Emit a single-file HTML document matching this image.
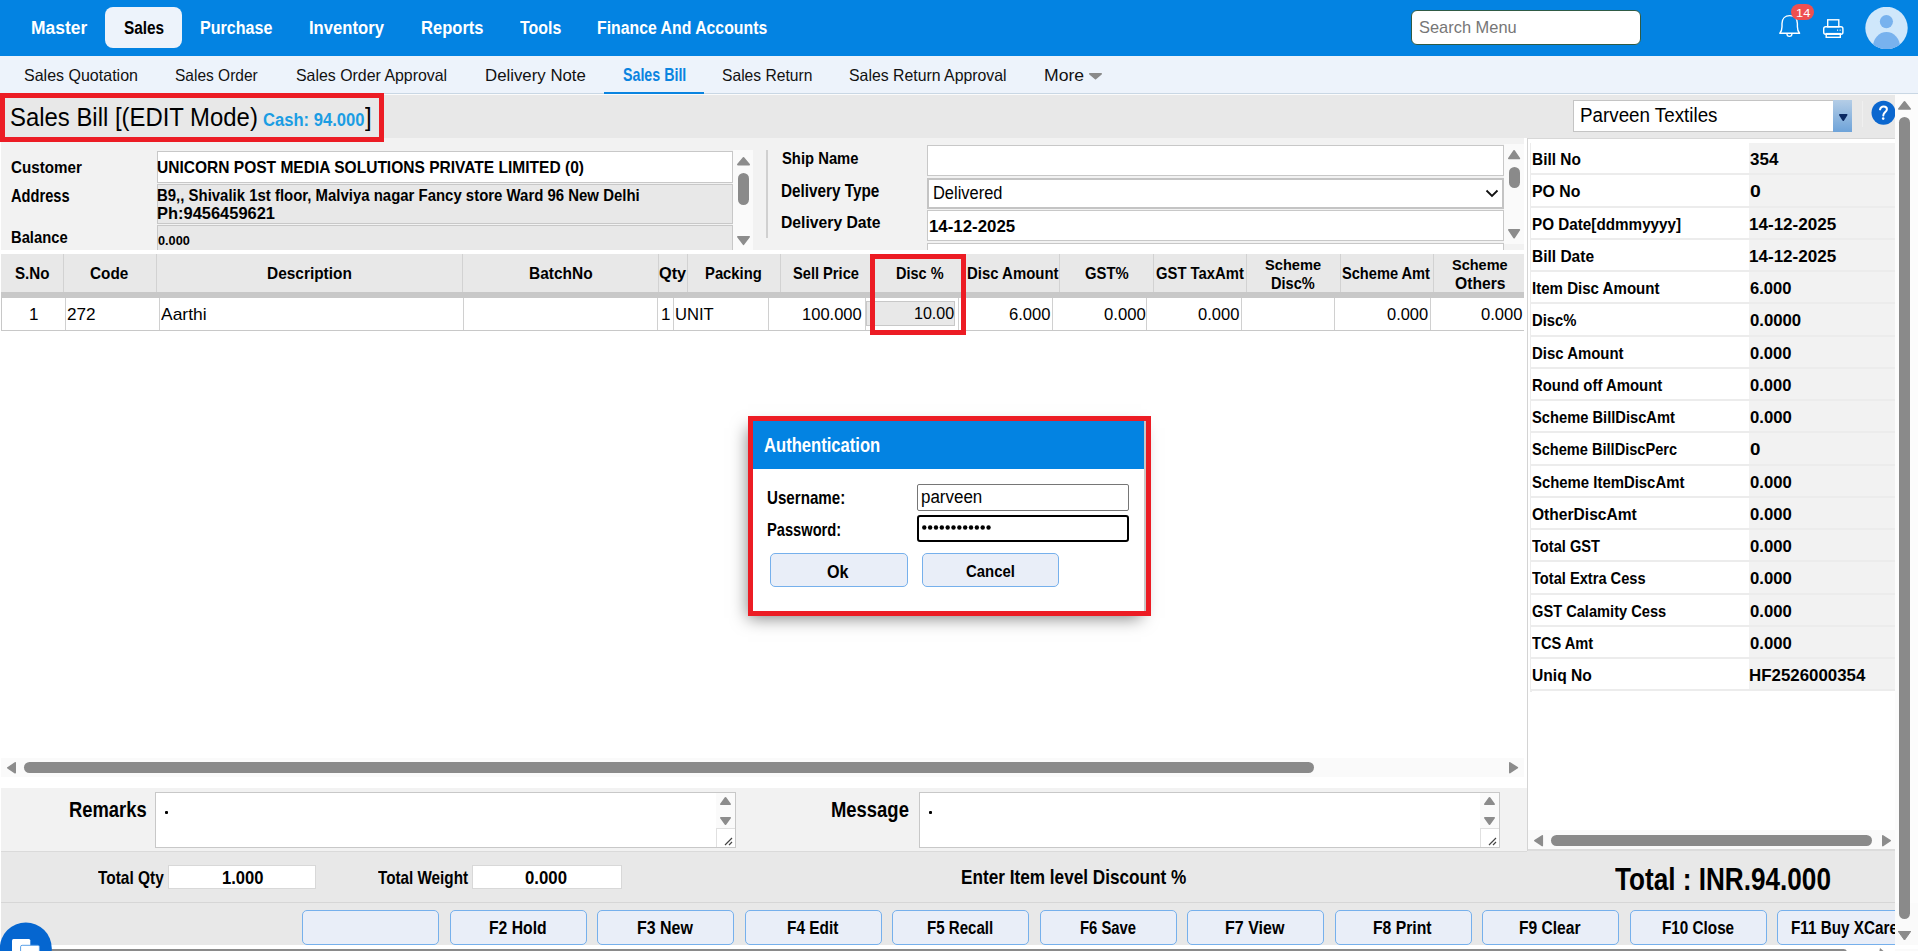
<!DOCTYPE html><html><head><meta charset="utf-8"><style>
html,body{margin:0;padding:0;width:1918px;height:951px;overflow:hidden;background:#fff;position:relative}
.b{position:absolute;box-sizing:border-box}
.t{position:absolute;line-height:1;white-space:nowrap;transform-origin:0 0;font-family:"Liberation Sans",sans-serif}
</style></head><body>
<div class="b" style="left:0px;top:0px;width:1918px;height:56px;background:#0383e2"></div>
<div class="b" style="left:105px;top:7px;width:77px;height:41px;background:#edf3fb;border-radius:8px"></div>
<div class="b" style="left:1411px;top:10px;width:230px;height:35px;background:#fff;border:1px solid #2f5b45;border-radius:6px;box-sizing:border-box"></div>
<svg class="b" style="left:1776px;top:12px" width="28" height="30" viewBox="0 0 28 30"><path d="M3.8 21.3 C5.4 19.6 6 17.8 6 14.8 L6 11.6 C6 6.4 9.3 3.6 13.7 3.6 C18.1 3.6 21.4 6.4 21.4 11.6 L21.4 14.8 C21.4 17.8 22 19.6 23.6 21.3 Z" fill="none" stroke="#fff" stroke-width="1.4" stroke-linejoin="round"/><path d="M10.9 21.6 C10.9 25.4 16 25.4 16 21.6" fill="none" stroke="#fff" stroke-width="1.3"/></svg>
<div class="b" style="left:1791px;top:4px;width:23px;height:16px;background:#ee5050;border-radius:8px"></div>
<svg class="b" style="left:1821px;top:17px" width="26" height="24" viewBox="0 0 26 24"><rect x="6.7" y="2.8" width="11.1" height="7" fill="none" stroke="#fff" stroke-width="1.4"/><rect x="2.7" y="9.8" width="19.2" height="7.4" rx="2" fill="none" stroke="#fff" stroke-width="1.4"/><rect x="5.2" y="16.6" width="14.1" height="3.7" fill="none" stroke="#fff" stroke-width="1.4"/><rect x="16" y="12.6" width="1.1" height="1.1" fill="#fff"/><rect x="18.6" y="12.6" width="1.1" height="1.1" fill="#fff"/></svg>
<svg class="b" style="left:1865px;top:7px" width="43" height="42" viewBox="0 0 43 42"><defs><clipPath id="av"><circle cx="21.5" cy="21" r="21.2"/></clipPath></defs><circle cx="21.5" cy="21" r="21.2" fill="#cfe7fb"/><g clip-path="url(#av)"><circle cx="21.4" cy="14.6" r="6.6" fill="#78b2ee"/><ellipse cx="21.5" cy="40" rx="13.6" ry="15" fill="#78b2ee"/></g></svg>
<div class="b" style="left:0px;top:56px;width:1918px;height:37px;background:#edf3fb"></div>
<div class="b" style="left:0px;top:93px;width:1918px;height:1px;background:#c9d7e4"></div>
<div class="b" style="left:604px;top:92px;width:100px;height:2px;background:#0a84e0"></div>
<svg class="b" style="left:1089px;top:73px;overflow:visible" width="13" height="6.5" viewBox="0 0 13 6.5"><path d="M0.80 0.80 L12.20 0.80 L6.50 5.70Z" fill="#8a8a8a" stroke="#8a8a8a" stroke-width="1.6" stroke-linejoin="round"/></svg>
<div class="b" style="left:0px;top:94px;width:1895px;height:44px;background:#e8e8e8"></div>
<div class="b" style="left:0px;top:94px;width:1895px;height:1px;background:#fbfbfb"></div>
<div class="b" style="left:0px;top:93px;width:384px;height:49px;border:5px solid #ec1c24;box-sizing:border-box;z-index:4"></div>
<div class="b" style="left:1573px;top:100px;width:279px;height:32px;background:#fff;border:1px solid #c4c4c4;box-sizing:border-box"></div>
<div class="b" style="left:1833px;top:100px;width:19px;height:32px;background:linear-gradient(#b4cde6,#6ea3d9)"></div>
<svg class="b" style="left:1838.5px;top:114px;overflow:visible" width="8.5" height="7" viewBox="0 0 8.5 7"><path d="M0.80 0.80 L7.70 0.80 L4.25 6.20Z" fill="#0c2a63" stroke="#0c2a63" stroke-width="1.6" stroke-linejoin="round"/></svg>
<div class="b" style="left:1862px;top:101px;width:1px;height:26px;background:#f0f0f0"></div>
<svg class="b" style="left:1871px;top:100px" width="25" height="26" viewBox="0 0 25 26"><circle cx="12.5" cy="12.8" r="12" fill="#0b67cf"/><path d="M9 9.4 C9.6 7.3 10.9 6.6 12.6 6.6 C14.6 6.6 15.9 7.7 15.9 9.3 C15.9 11.6 12.8 12.4 12.4 14.8 L12.3 15.6" fill="none" stroke="#fff" stroke-width="2" stroke-linecap="round"/><circle cx="12.2" cy="18.6" r="1.3" fill="#fff"/></svg>
<div class="b" style="left:1895px;top:94px;width:23px;height:857px;background:#fcfcfc"></div>
<svg class="b" style="left:1898px;top:100.5px;overflow:visible" width="13" height="8.700000000000003" viewBox="0 0 13 8.700000000000003"><path d="M6.50 0.80 L12.20 7.90 L0.80 7.90Z" fill="#8c8c8c" stroke="#8c8c8c" stroke-width="1.6" stroke-linejoin="round"/></svg>
<div class="b" style="left:1899px;top:117px;width:11px;height:802px;background:#8a8a8a;border-radius:5.5px"></div>
<svg class="b" style="left:1898px;top:930.6px;overflow:visible" width="13" height="9.100000000000023" viewBox="0 0 13 9.100000000000023"><path d="M0.80 0.80 L12.20 0.80 L6.50 8.30Z" fill="#8c8c8c" stroke="#8c8c8c" stroke-width="1.6" stroke-linejoin="round"/></svg>
<div class="b" style="left:1px;top:138px;width:1523px;height:112px;background:#f2f2f2"></div>
<div class="b" style="left:157px;top:151px;width:576px;height:32px;background:#fff;border:1px solid #c8c8c8;box-sizing:border-box"></div>
<div class="b" style="left:157px;top:184px;width:576px;height:40px;background:#e8e8e8;border:1px solid #c8c8c8;box-sizing:border-box"></div>
<div class="b" style="left:157px;top:225px;width:576px;height:25px;background:#e8e8e8;border:1px solid #c8c8c8;border-bottom:none;box-sizing:border-box"></div>
<div class="b" style="left:733px;top:150px;width:20px;height:100px;background:#fafafa"></div>
<svg class="b" style="left:737px;top:157px;overflow:visible" width="13" height="8.400000000000006" viewBox="0 0 13 8.400000000000006"><path d="M6.50 0.80 L12.20 7.60 L0.80 7.60Z" fill="#8c8c8c" stroke="#8c8c8c" stroke-width="1.6" stroke-linejoin="round"/></svg>
<div class="b" style="left:738px;top:172.7px;width:11px;height:32.30000000000001px;background:#8a8a8a;border-radius:5.5px"></div>
<svg class="b" style="left:737px;top:235.5px;overflow:visible" width="13" height="9.099999999999994" viewBox="0 0 13 9.099999999999994"><path d="M0.80 0.80 L12.20 0.80 L6.50 8.30Z" fill="#8c8c8c" stroke="#8c8c8c" stroke-width="1.6" stroke-linejoin="round"/></svg>
<div class="b" style="left:766px;top:150px;width:2px;height:87.5px;background:#d0d0d0"></div>
<div class="b" style="left:927px;top:145px;width:577px;height:31px;background:#fff;border:1px solid #c8c8c8;box-sizing:border-box"></div>
<div class="b" style="left:927px;top:177.5px;width:577px;height:31.5px;background:#fff;border:2px solid #c4c4c4;box-sizing:border-box"></div>
<svg class="b" style="left:1485px;top:189px" width="14" height="9" viewBox="0 0 14 9"><path d="M1.5 1.5 L7 7 L12.5 1.5" fill="none" stroke="#111" stroke-width="1.8"/></svg>
<div class="b" style="left:927px;top:210px;width:577px;height:30.5px;background:#fff;border:1px solid #c8c8c8;box-sizing:border-box"></div>
<div class="b" style="left:927px;top:242.5px;width:577px;height:7.5px;background:#fff;border:1px solid #c8c8c8;border-bottom:none;box-sizing:border-box"></div>
<div class="b" style="left:1504px;top:144px;width:20px;height:99.5px;background:#fafafa"></div>
<svg class="b" style="left:1508.4px;top:150px;overflow:visible" width="12.199999999999818" height="9.300000000000011" viewBox="0 0 12.199999999999818 9.300000000000011"><path d="M6.10 0.80 L11.40 8.50 L0.80 8.50Z" fill="#8c8c8c" stroke="#8c8c8c" stroke-width="1.6" stroke-linejoin="round"/></svg>
<div class="b" style="left:1509px;top:167px;width:11px;height:20.599999999999994px;background:#8a8a8a;border-radius:5.5px"></div>
<svg class="b" style="left:1508.4px;top:229.3px;overflow:visible" width="12.199999999999818" height="9.5" viewBox="0 0 12.199999999999818 9.5"><path d="M0.80 0.80 L11.40 0.80 L6.10 8.70Z" fill="#8c8c8c" stroke="#8c8c8c" stroke-width="1.6" stroke-linejoin="round"/></svg>
<div class="b" style="left:1px;top:254px;width:1523px;height:38px;background:#e8e8e8"></div>
<div class="b" style="left:63px;top:254px;width:1px;height:38px;background:#d2d2d2"></div>
<div class="b" style="left:156px;top:254px;width:1px;height:38px;background:#d2d2d2"></div>
<div class="b" style="left:462px;top:254px;width:1px;height:38px;background:#d2d2d2"></div>
<div class="b" style="left:658px;top:254px;width:1px;height:38px;background:#d2d2d2"></div>
<div class="b" style="left:687px;top:254px;width:1px;height:38px;background:#d2d2d2"></div>
<div class="b" style="left:780px;top:254px;width:1px;height:38px;background:#d2d2d2"></div>
<div class="b" style="left:872px;top:254px;width:1px;height:38px;background:#d2d2d2"></div>
<div class="b" style="left:961px;top:254px;width:1px;height:38px;background:#d2d2d2"></div>
<div class="b" style="left:1059px;top:254px;width:1px;height:38px;background:#d2d2d2"></div>
<div class="b" style="left:1153px;top:254px;width:1px;height:38px;background:#d2d2d2"></div>
<div class="b" style="left:1246px;top:254px;width:1px;height:38px;background:#d2d2d2"></div>
<div class="b" style="left:1340px;top:254px;width:1px;height:38px;background:#d2d2d2"></div>
<div class="b" style="left:1433px;top:254px;width:1px;height:38px;background:#d2d2d2"></div>
<div class="b" style="left:1px;top:292px;width:1523px;height:6px;background:#c8c8c8"></div>
<div class="b" style="left:1px;top:298px;width:1523px;height:33px;background:#fff;border-left:1px solid #c8c8c8;border-bottom:1px solid #c8c8c8;box-sizing:border-box"></div>
<div class="b" style="left:65px;top:298px;width:1px;height:32px;background:#d0d0d0"></div>
<div class="b" style="left:159px;top:298px;width:1px;height:32px;background:#d0d0d0"></div>
<div class="b" style="left:463px;top:298px;width:1px;height:32px;background:#d0d0d0"></div>
<div class="b" style="left:657px;top:298px;width:1px;height:32px;background:#d0d0d0"></div>
<div class="b" style="left:673px;top:298px;width:1px;height:32px;background:#d0d0d0"></div>
<div class="b" style="left:768px;top:298px;width:1px;height:32px;background:#d0d0d0"></div>
<div class="b" style="left:864.5px;top:298px;width:1.0px;height:32px;background:#d0d0d0"></div>
<div class="b" style="left:957.6px;top:298px;width:1.0px;height:32px;background:#d0d0d0"></div>
<div class="b" style="left:1052.3px;top:298px;width:1.0px;height:32px;background:#d0d0d0"></div>
<div class="b" style="left:1146.3px;top:298px;width:1.0px;height:32px;background:#d0d0d0"></div>
<div class="b" style="left:1241.3px;top:298px;width:1.0px;height:32px;background:#d0d0d0"></div>
<div class="b" style="left:1334.4px;top:298px;width:1.0px;height:32px;background:#d0d0d0"></div>
<div class="b" style="left:1429.6px;top:298px;width:1.0px;height:32px;background:#d0d0d0"></div>
<div class="b" style="left:866px;top:301px;width:89px;height:25px;background:#e8e8e8;border:1px solid #c8c8c8;box-sizing:border-box"></div>
<div class="b" style="left:870px;top:254px;width:96px;height:81px;border:5px solid #ec1c24;box-sizing:border-box;z-index:4"></div>
<div class="b" style="left:1px;top:758px;width:1523px;height:19px;background:#fafafa"></div>
<svg class="b" style="left:7px;top:762px;overflow:visible" width="9" height="11.600000000000023" viewBox="0 0 9 11.600000000000023"><path d="M0.80 5.80 L8.20 0.80 L8.20 10.80Z" fill="#8c8c8c" stroke="#8c8c8c" stroke-width="1.6" stroke-linejoin="round"/></svg>
<div class="b" style="left:24px;top:762px;width:1290px;height:11px;background:#8a8a8a;border-radius:5.5px"></div>
<svg class="b" style="left:1509.2px;top:762.3px;overflow:visible" width="9.200000000000045" height="11.400000000000091" viewBox="0 0 9.200000000000045 11.400000000000091"><path d="M0.80 0.80 L8.40 5.70 L0.80 10.60Z" fill="#8c8c8c" stroke="#8c8c8c" stroke-width="1.6" stroke-linejoin="round"/></svg>
<div class="b" style="left:1527px;top:138px;width:1px;height:713px;background:#d4d4d4"></div>
<div class="b" style="left:1528px;top:138px;width:367px;height:1px;background:#d8d8d8"></div>
<div class="b" style="left:1530px;top:143px;width:1.5px;height:549px;background:#ececec"></div>
<div class="b" style="left:1531px;top:143.0px;width:218px;height:30.25px;background:#fff"></div>
<div class="b" style="left:1749px;top:143.0px;width:146px;height:30.25px;background:#f2f2f2"></div>
<div class="b" style="left:1531px;top:173.25px;width:364px;height:2.0px;background:#ececec"></div>
<div class="b" style="left:1531px;top:175.25px;width:218px;height:30.25px;background:#fff"></div>
<div class="b" style="left:1749px;top:175.25px;width:146px;height:30.25px;background:#f2f2f2"></div>
<div class="b" style="left:1531px;top:205.5px;width:364px;height:2.0px;background:#ececec"></div>
<div class="b" style="left:1531px;top:207.5px;width:218px;height:30.25px;background:#fff"></div>
<div class="b" style="left:1749px;top:207.5px;width:146px;height:30.25px;background:#f2f2f2"></div>
<div class="b" style="left:1531px;top:237.75px;width:364px;height:2.0px;background:#ececec"></div>
<div class="b" style="left:1531px;top:239.75px;width:218px;height:30.25px;background:#fff"></div>
<div class="b" style="left:1749px;top:239.75px;width:146px;height:30.25px;background:#f2f2f2"></div>
<div class="b" style="left:1531px;top:270.0px;width:364px;height:2.0px;background:#ececec"></div>
<div class="b" style="left:1531px;top:272.0px;width:218px;height:30.25px;background:#fff"></div>
<div class="b" style="left:1749px;top:272.0px;width:146px;height:30.25px;background:#f2f2f2"></div>
<div class="b" style="left:1531px;top:302.25px;width:364px;height:2.0px;background:#ececec"></div>
<div class="b" style="left:1531px;top:304.25px;width:218px;height:30.25px;background:#fff"></div>
<div class="b" style="left:1749px;top:304.25px;width:146px;height:30.25px;background:#f2f2f2"></div>
<div class="b" style="left:1531px;top:334.5px;width:364px;height:2.0px;background:#ececec"></div>
<div class="b" style="left:1531px;top:336.5px;width:218px;height:30.25px;background:#fff"></div>
<div class="b" style="left:1749px;top:336.5px;width:146px;height:30.25px;background:#f2f2f2"></div>
<div class="b" style="left:1531px;top:366.75px;width:364px;height:2.0px;background:#ececec"></div>
<div class="b" style="left:1531px;top:368.75px;width:218px;height:30.25px;background:#fff"></div>
<div class="b" style="left:1749px;top:368.75px;width:146px;height:30.25px;background:#f2f2f2"></div>
<div class="b" style="left:1531px;top:399.0px;width:364px;height:2.0px;background:#ececec"></div>
<div class="b" style="left:1531px;top:401.0px;width:218px;height:30.25px;background:#fff"></div>
<div class="b" style="left:1749px;top:401.0px;width:146px;height:30.25px;background:#f2f2f2"></div>
<div class="b" style="left:1531px;top:431.25px;width:364px;height:2.0px;background:#ececec"></div>
<div class="b" style="left:1531px;top:433.25px;width:218px;height:30.25px;background:#fff"></div>
<div class="b" style="left:1749px;top:433.25px;width:146px;height:30.25px;background:#f2f2f2"></div>
<div class="b" style="left:1531px;top:463.5px;width:364px;height:2.0px;background:#ececec"></div>
<div class="b" style="left:1531px;top:465.5px;width:218px;height:30.25px;background:#fff"></div>
<div class="b" style="left:1749px;top:465.5px;width:146px;height:30.25px;background:#f2f2f2"></div>
<div class="b" style="left:1531px;top:495.75px;width:364px;height:2.0px;background:#ececec"></div>
<div class="b" style="left:1531px;top:497.75px;width:218px;height:30.25px;background:#fff"></div>
<div class="b" style="left:1749px;top:497.75px;width:146px;height:30.25px;background:#f2f2f2"></div>
<div class="b" style="left:1531px;top:528.0px;width:364px;height:2.0px;background:#ececec"></div>
<div class="b" style="left:1531px;top:530.0px;width:218px;height:30.25px;background:#fff"></div>
<div class="b" style="left:1749px;top:530.0px;width:146px;height:30.25px;background:#f2f2f2"></div>
<div class="b" style="left:1531px;top:560.25px;width:364px;height:2.0px;background:#ececec"></div>
<div class="b" style="left:1531px;top:562.25px;width:218px;height:30.25px;background:#fff"></div>
<div class="b" style="left:1749px;top:562.25px;width:146px;height:30.25px;background:#f2f2f2"></div>
<div class="b" style="left:1531px;top:592.5px;width:364px;height:2.0px;background:#ececec"></div>
<div class="b" style="left:1531px;top:594.5px;width:218px;height:30.25px;background:#fff"></div>
<div class="b" style="left:1749px;top:594.5px;width:146px;height:30.25px;background:#f2f2f2"></div>
<div class="b" style="left:1531px;top:624.75px;width:364px;height:2.0px;background:#ececec"></div>
<div class="b" style="left:1531px;top:626.75px;width:218px;height:30.25px;background:#fff"></div>
<div class="b" style="left:1749px;top:626.75px;width:146px;height:30.25px;background:#f2f2f2"></div>
<div class="b" style="left:1531px;top:657.0px;width:364px;height:2.0px;background:#ececec"></div>
<div class="b" style="left:1531px;top:659.0px;width:218px;height:30.25px;background:#fff"></div>
<div class="b" style="left:1749px;top:659.0px;width:146px;height:30.25px;background:#f2f2f2"></div>
<div class="b" style="left:1531px;top:689.25px;width:364px;height:2.0px;background:#ececec"></div>
<div class="b" style="left:1528px;top:830px;width:367px;height:19px;background:#fafafa"></div>
<svg class="b" style="left:1533.7px;top:835.4px;overflow:visible" width="9.099999999999909" height="11.399999999999977" viewBox="0 0 9.099999999999909 11.399999999999977"><path d="M0.80 5.70 L8.30 0.80 L8.30 10.60Z" fill="#8c8c8c" stroke="#8c8c8c" stroke-width="1.6" stroke-linejoin="round"/></svg>
<div class="b" style="left:1550.8px;top:835.4px;width:320.79999999999995px;height:10.800000000000068px;background:#8a8a8a;border-radius:5.5px"></div>
<svg class="b" style="left:1882px;top:835.4px;overflow:visible" width="9" height="11.399999999999977" viewBox="0 0 9 11.399999999999977"><path d="M0.80 0.80 L8.20 5.70 L0.80 10.60Z" fill="#8c8c8c" stroke="#8c8c8c" stroke-width="1.6" stroke-linejoin="round"/></svg>
<div class="b" style="left:1528px;top:849px;width:367px;height:2px;background:#dcdcdc"></div>
<div class="b" style="left:1px;top:788px;width:1526px;height:63px;background:#f2f2f2"></div>
<div class="b" style="left:155px;top:792px;width:581px;height:56px;background:#fff;border:1px solid #c8c8c8;box-sizing:border-box"></div>
<div class="b" style="left:716px;top:793px;width:19px;height:35px;background:#fafafa"></div>
<svg class="b" style="left:720px;top:797px;overflow:visible" width="11" height="8" viewBox="0 0 11 8"><path d="M5.50 0.80 L10.20 7.20 L0.80 7.20Z" fill="#8c8c8c" stroke="#8c8c8c" stroke-width="1.6" stroke-linejoin="round"/></svg>
<svg class="b" style="left:720px;top:817px;overflow:visible" width="11" height="8" viewBox="0 0 11 8"><path d="M0.80 0.80 L10.20 0.80 L5.50 7.20Z" fill="#8c8c8c" stroke="#8c8c8c" stroke-width="1.6" stroke-linejoin="round"/></svg>
<div class="b" style="left:716px;top:828px;width:19px;height:19px;background:#fff;border-left:1px solid #e0e0e0;border-top:1px solid #e0e0e0;box-sizing:border-box"></div>
<svg class="b" style="left:724px;top:837px" width="9" height="9" viewBox="0 0 9 9"><path d="M1 8 L8 1 M5 8 L8 5" stroke="#444" stroke-width="1.2"/></svg>
<div class="b" style="left:165px;top:811px;width:2.5px;height:2.5px;background:#000;border-radius:1px"></div>
<div class="b" style="left:919px;top:792px;width:581px;height:56px;background:#fff;border:1px solid #c8c8c8;box-sizing:border-box"></div>
<div class="b" style="left:1480px;top:793px;width:19px;height:35px;background:#fafafa"></div>
<svg class="b" style="left:1484px;top:797px;overflow:visible" width="11" height="8" viewBox="0 0 11 8"><path d="M5.50 0.80 L10.20 7.20 L0.80 7.20Z" fill="#8c8c8c" stroke="#8c8c8c" stroke-width="1.6" stroke-linejoin="round"/></svg>
<svg class="b" style="left:1484px;top:817px;overflow:visible" width="11" height="8" viewBox="0 0 11 8"><path d="M0.80 0.80 L10.20 0.80 L5.50 7.20Z" fill="#8c8c8c" stroke="#8c8c8c" stroke-width="1.6" stroke-linejoin="round"/></svg>
<div class="b" style="left:1480px;top:828px;width:19px;height:19px;background:#fff;border-left:1px solid #e0e0e0;border-top:1px solid #e0e0e0;box-sizing:border-box"></div>
<svg class="b" style="left:1488px;top:837px" width="9" height="9" viewBox="0 0 9 9"><path d="M1 8 L8 1 M5 8 L8 5" stroke="#444" stroke-width="1.2"/></svg>
<div class="b" style="left:929px;top:811px;width:2.5px;height:2.5px;background:#000;border-radius:1px"></div>
<div class="b" style="left:1px;top:851px;width:1894px;height:94px;background:#e8e8e8"></div>
<div class="b" style="left:1px;top:851px;width:1526px;height:1px;background:#dadada"></div>
<div class="b" style="left:1px;top:902px;width:1894px;height:1px;background:#d6d6d6"></div>
<div class="b" style="left:167.6px;top:864.6px;width:148.9px;height:24.0px;background:#fff;border:1px solid #d8d8d8;box-sizing:border-box"></div>
<div class="b" style="left:472px;top:864.6px;width:149.60000000000002px;height:24.0px;background:#fff;border:1px solid #d8d8d8;box-sizing:border-box"></div>
<div class="b" style="left:302.0px;top:910px;width:137.0px;height:35px;background:#e9eef8;border:1px solid #76b0ec;border-radius:5px;box-sizing:border-box"></div>
<div class="b" style="left:449.5px;top:910px;width:137.0px;height:35px;background:#e9eef8;border:1px solid #76b0ec;border-radius:5px;box-sizing:border-box"></div>
<div class="b" style="left:597.0px;top:910px;width:137.0px;height:35px;background:#e9eef8;border:1px solid #76b0ec;border-radius:5px;box-sizing:border-box"></div>
<div class="b" style="left:744.5px;top:910px;width:137.0px;height:35px;background:#e9eef8;border:1px solid #76b0ec;border-radius:5px;box-sizing:border-box"></div>
<div class="b" style="left:892.0px;top:910px;width:137.0px;height:35px;background:#e9eef8;border:1px solid #76b0ec;border-radius:5px;box-sizing:border-box"></div>
<div class="b" style="left:1039.5px;top:910px;width:137.0px;height:35px;background:#e9eef8;border:1px solid #76b0ec;border-radius:5px;box-sizing:border-box"></div>
<div class="b" style="left:1187.0px;top:910px;width:137.0px;height:35px;background:#e9eef8;border:1px solid #76b0ec;border-radius:5px;box-sizing:border-box"></div>
<div class="b" style="left:1334.5px;top:910px;width:137.0px;height:35px;background:#e9eef8;border:1px solid #76b0ec;border-radius:5px;box-sizing:border-box"></div>
<div class="b" style="left:1482.0px;top:910px;width:137.0px;height:35px;background:#e9eef8;border:1px solid #76b0ec;border-radius:5px;box-sizing:border-box"></div>
<div class="b" style="left:1629.5px;top:910px;width:137.0px;height:35px;background:#e9eef8;border:1px solid #76b0ec;border-radius:5px;box-sizing:border-box"></div>
<div class="b" style="left:1777.0px;top:910px;width:137.0px;height:35px;background:#e9eef8;border:1px solid #76b0ec;border-radius:5px;box-sizing:border-box"></div>
<div class="b" style="left:1895px;top:903px;width:23px;height:48px;background:#fafafa;z-index:2"></div>
<svg class="b" style="left:1898px;top:930.6px;z-index:3" width="13" height="9.1" viewBox="0 0 13 9.1"><path d="M0 0 L13 0 L6.5 9.1Z" fill="#8c8c8c" stroke="#8c8c8c" stroke-width="1" stroke-linejoin="round"/></svg>
<div class="b" style="left:1899px;top:903px;width:11px;height:16px;background:#8a8a8a;border-radius:0 0 5.5px 5.5px;z-index:3"></div>
<div class="b" style="left:0px;top:945px;width:1918px;height:4px;background:#fff;z-index:2"></div>
<div class="b" style="left:0px;top:949px;width:1847px;height:7px;background:#8a8a8a;border-radius:0 5px 5px 0;z-index:2"></div>
<svg class="b" style="left:1878px;top:947px;z-index:3" width="10" height="6" viewBox="0 0 10 6"><path d="M1 6 L2 1 L8 6Z" fill="#8c8c8c"/></svg>
<svg class="b" style="left:0;top:922px;z-index:4" width="52" height="29" viewBox="0 0 52 29"><circle cx="25.8" cy="26.5" r="26" fill="#0566d0"/><rect x="12" y="17" width="18.3" height="14" rx="1.5" fill="#fff"/><rect x="20.6" y="23.3" width="18.8" height="10" rx="1.5" fill="#fff" stroke="#5aa0e8" stroke-width="1"/></svg>
<div class="b" style="left:753px;top:421px;width:393px;height:190px;box-shadow:-5px 7px 16px rgba(0,0,0,0.5);z-index:5"></div>
<div class="b" style="left:748px;top:416px;width:403px;height:200px;background:#fff;z-index:5"></div>
<div class="b" style="left:753px;top:421px;width:391px;height:47.5px;background:#0383e2;z-index:5"></div>
<div class="b" style="left:1144px;top:421px;width:2px;height:190px;background:#c8c8c8;z-index:5"></div>
<div class="b" style="left:748px;top:416px;width:403px;height:200px;border:5px solid #ec1c24;box-sizing:border-box;z-index:6"></div>
<div class="b" style="left:917px;top:484.3px;width:212px;height:26.399999999999977px;background:#fff;border:1px solid #767676;border-radius:2px;box-sizing:border-box;z-index:5"></div>
<div class="b" style="left:917px;top:515px;width:212px;height:26.5px;background:#fff;border:2px solid #000;border-radius:3px;box-sizing:border-box;z-index:5"></div>
<svg class="b" style="left:922px;top:525.4px;z-index:6" width="72" height="6" viewBox="0 0 72 6"><circle cx="2.30" cy="2.5" r="2.2" fill="#000"/><circle cx="8.14" cy="2.5" r="2.2" fill="#000"/><circle cx="13.98" cy="2.5" r="2.2" fill="#000"/><circle cx="19.82" cy="2.5" r="2.2" fill="#000"/><circle cx="25.66" cy="2.5" r="2.2" fill="#000"/><circle cx="31.50" cy="2.5" r="2.2" fill="#000"/><circle cx="37.34" cy="2.5" r="2.2" fill="#000"/><circle cx="43.18" cy="2.5" r="2.2" fill="#000"/><circle cx="49.02" cy="2.5" r="2.2" fill="#000"/><circle cx="54.86" cy="2.5" r="2.2" fill="#000"/><circle cx="60.70" cy="2.5" r="2.2" fill="#000"/><circle cx="66.54" cy="2.5" r="2.2" fill="#000"/></svg>
<div class="b" style="left:770px;top:553.3px;width:137.60000000000002px;height:34.200000000000045px;background:#e9eef8;border:1px solid #76b0ec;border-radius:5px;box-sizing:border-box;z-index:5"></div>
<div class="b" style="left:922.2px;top:553.3px;width:137.29999999999995px;height:34.200000000000045px;background:#e9eef8;border:1px solid #76b0ec;border-radius:5px;box-sizing:border-box;z-index:5"></div>
<div class="t" style="left:30.95px;top:18.00px;font-size:19.20px;font-weight:700;color:#fff;transform:scaleX(0.9081);">Master</div>
<div class="t" style="left:200.04px;top:18.00px;font-size:19.20px;font-weight:700;color:#fff;transform:scaleX(0.8373);">Purchase</div>
<div class="t" style="left:309.00px;top:18.00px;font-size:19.20px;font-weight:700;color:#fff;transform:scaleX(0.8671);">Inventory</div>
<div class="t" style="left:421.01px;top:18.00px;font-size:19.20px;font-weight:700;color:#fff;transform:scaleX(0.8628);">Reports</div>
<div class="t" style="left:519.84px;top:18.00px;font-size:19.20px;font-weight:700;color:#fff;transform:scaleX(0.8305);">Tools</div>
<div class="t" style="left:597.05px;top:18.00px;font-size:19.20px;font-weight:700;color:#fff;transform:scaleX(0.8245);">Finance And Accounts</div>
<div class="t" style="left:123.69px;top:18.00px;font-size:19.20px;font-weight:700;color:#000;transform:scaleX(0.8005);">Sales</div>
<div class="t" style="left:1419.34px;top:19.00px;font-size:17.15px;font-weight:400;color:#767676;transform:scaleX(0.9582);">Search Menu</div>
<div class="t" style="left:1795.80px;top:7.00px;font-size:11.63px;font-weight:400;color:#fff;transform:scaleX(1.1087);">14</div>
<div class="t" style="left:24.36px;top:68.00px;font-size:16.72px;font-weight:400;color:#111;transform:scaleX(0.9588);">Sales Quotation</div>
<div class="t" style="left:175.38px;top:68.00px;font-size:16.72px;font-weight:400;color:#111;transform:scaleX(0.9287);">Sales Order</div>
<div class="t" style="left:296.36px;top:68.00px;font-size:16.72px;font-weight:400;color:#111;transform:scaleX(0.9520);">Sales Order Approval</div>
<div class="t" style="left:484.65px;top:68.00px;font-size:16.72px;font-weight:400;color:#111;transform:scaleX(1.0063);">Delivery Note</div>
<div class="t" style="left:722.37px;top:68.00px;font-size:16.72px;font-weight:400;color:#111;transform:scaleX(0.9366);">Sales Return</div>
<div class="t" style="left:849.37px;top:68.00px;font-size:16.72px;font-weight:400;color:#111;transform:scaleX(0.9484);">Sales Return Approval</div>
<div class="t" style="left:1043.59px;top:68.00px;font-size:16.72px;font-weight:400;color:#111;transform:scaleX(1.0514);">More</div>
<div class="t" style="left:622.72px;top:66.00px;font-size:18.17px;font-weight:700;color:#0a84e0;transform:scaleX(0.7841);">Sales Bill</div>
<div class="t" style="left:9.84px;top:104.00px;font-size:26.45px;font-weight:400;color:#000;transform:scaleX(0.9037);">Sales Bill [(EDIT Mode)</div>
<div class="t" style="left:263.14px;top:111.00px;font-size:18.90px;font-weight:700;color:#1b9de3;transform:scaleX(0.8782);">Cash: 94.000</div>
<div class="t" style="left:365.00px;top:104.00px;font-size:26.50px;font-weight:400;color:#000;transform:scaleX(0.8985);">]</div>
<div class="t" style="left:1580.00px;top:105.00px;font-size:20.35px;font-weight:400;color:#000;transform:scaleX(0.9234);">Parveen Textiles</div>
<div class="t" style="left:10.89px;top:159.00px;font-size:17.30px;font-weight:700;color:#000;transform:scaleX(0.8775);">Customer</div>
<div class="t" style="left:11.21px;top:188.00px;font-size:17.44px;font-weight:700;color:#000;transform:scaleX(0.8399);">Address</div>
<div class="t" style="left:11.11px;top:229.00px;font-size:17.30px;font-weight:700;color:#000;transform:scaleX(0.8543);">Balance</div>
<div class="t" style="left:157.07px;top:159.00px;font-size:17.30px;font-weight:700;color:#000;transform:scaleX(0.8990);">UNICORN POST MEDIA SOLUTIONS PRIVATE LIMITED (0)</div>
<div class="t" style="left:157.10px;top:187.00px;font-size:16.42px;font-weight:700;color:#000;transform:scaleX(0.9106);">B9,, Shivalik 1st floor, Malviya nagar Fancy store Ward 96 New Delhi</div>
<div class="t" style="left:157.01px;top:206.00px;font-size:15.84px;font-weight:700;color:#000;transform:scaleX(1.0395);">Ph:9456459621</div>
<div class="t" style="left:157.62px;top:234.00px;font-size:13.52px;font-weight:700;color:#000;transform:scaleX(0.9413);">0.000</div>
<div class="t" style="left:782.00px;top:150.00px;font-size:17.30px;font-weight:700;color:#000;transform:scaleX(0.8567);">Ship Name</div>
<div class="t" style="left:781.38px;top:182.00px;font-size:18.17px;font-weight:700;color:#000;transform:scaleX(0.8425);">Delivery Type</div>
<div class="t" style="left:781.36px;top:214.00px;font-size:17.30px;font-weight:700;color:#000;transform:scaleX(0.9092);">Delivery Date</div>
<div class="t" style="left:933.48px;top:185.00px;font-size:17.44px;font-weight:400;color:#000;transform:scaleX(0.9425);">Delivered</div>
<div class="t" style="left:928.59px;top:218.00px;font-size:17.01px;font-weight:700;color:#000;transform:scaleX(0.9904);">14-12-2025</div>
<div class="t" style="left:14.70px;top:266.00px;font-size:16.86px;font-weight:700;color:#000;transform:scaleX(0.8988);">S.No</div>
<div class="t" style="left:90.14px;top:266.00px;font-size:16.86px;font-weight:700;color:#000;transform:scaleX(0.9077);">Code</div>
<div class="t" style="left:266.57px;top:266.00px;font-size:16.86px;font-weight:700;color:#000;transform:scaleX(0.9150);">Description</div>
<div class="t" style="left:528.57px;top:266.00px;font-size:16.86px;font-weight:700;color:#000;transform:scaleX(0.9183);">BatchNo</div>
<div class="t" style="left:658.85px;top:266.00px;font-size:16.86px;font-weight:700;color:#000;transform:scaleX(0.9637);">Qty</div>
<div class="t" style="left:705.11px;top:266.00px;font-size:16.86px;font-weight:700;color:#000;transform:scaleX(0.8783);">Packing</div>
<div class="t" style="left:793.46px;top:266.00px;font-size:16.86px;font-weight:700;color:#000;transform:scaleX(0.8683);">Sell Price</div>
<div class="t" style="left:896.13px;top:266.00px;font-size:16.86px;font-weight:700;color:#000;transform:scaleX(0.8599);">Disc %</div>
<div class="t" style="left:966.50px;top:266.00px;font-size:16.86px;font-weight:700;color:#000;transform:scaleX(0.8852);">Disc Amount</div>
<div class="t" style="left:1084.61px;top:266.00px;font-size:16.86px;font-weight:700;color:#000;transform:scaleX(0.8797);">GST%</div>
<div class="t" style="left:1155.51px;top:266.00px;font-size:16.86px;font-weight:700;color:#000;transform:scaleX(0.8790);">GST TaxAmt</div>
<div class="t" style="left:1342.41px;top:266.00px;font-size:16.86px;font-weight:700;color:#000;transform:scaleX(0.8668);">Scheme Amt</div>
<div class="t" style="left:1265.31px;top:258.00px;font-size:14.83px;font-weight:700;color:#000;transform:scaleX(0.9861);">Scheme</div>
<div class="t" style="left:1271.43px;top:275.00px;font-size:16.42px;font-weight:700;color:#000;transform:scaleX(0.8875);">Disc%</div>
<div class="t" style="left:1452.41px;top:258.00px;font-size:14.83px;font-weight:700;color:#000;transform:scaleX(0.9790);">Scheme</div>
<div class="t" style="left:1454.87px;top:275.00px;font-size:16.42px;font-weight:700;color:#000;transform:scaleX(0.9538);">Others</div>
<div class="t" style="left:28.81px;top:307.00px;font-size:16.57px;font-weight:400;color:#000;transform:scaleX(1.0287);">1</div>
<div class="t" style="left:66.64px;top:307.00px;font-size:16.57px;font-weight:400;color:#000;transform:scaleX(1.0363);">272</div>
<div class="t" style="left:161.00px;top:307.00px;font-size:16.57px;font-weight:400;color:#000;transform:scaleX(1.0531);">Aarthi</div>
<div class="t" style="left:660.81px;top:307.00px;font-size:16.57px;font-weight:400;color:#000;transform:scaleX(1.0287);">1</div>
<div class="t" style="left:674.59px;top:307.00px;font-size:16.57px;font-weight:400;color:#000;transform:scaleX(1.0026);">UNIT</div>
<div class="t" style="left:801.84px;top:307.00px;font-size:16.57px;font-weight:400;color:#000;transform:scaleX(0.9976);">100.000</div>
<div class="t" style="left:1008.87px;top:307.00px;font-size:16.57px;font-weight:400;color:#000;transform:scaleX(1.0015);">6.000</div>
<div class="t" style="left:1103.50px;top:307.00px;font-size:16.57px;font-weight:400;color:#000;transform:scaleX(1.0082);">0.000</div>
<div class="t" style="left:1198.40px;top:307.00px;font-size:16.57px;font-weight:400;color:#000;transform:scaleX(0.9983);">0.000</div>
<div class="t" style="left:1386.61px;top:307.00px;font-size:16.57px;font-weight:400;color:#000;transform:scaleX(0.9933);">0.000</div>
<div class="t" style="left:1481.30px;top:307.00px;font-size:16.57px;font-weight:400;color:#000;transform:scaleX(1.0008);">0.000</div>
<div class="t" style="left:914.18px;top:306.00px;font-size:16.57px;font-weight:400;color:#000;transform:scaleX(0.9696);">10.00</div>
<div class="t" style="left:1531.57px;top:151.00px;font-size:17.15px;font-weight:700;color:#000;transform:scaleX(0.9004);">Bill No</div>
<div class="t" style="left:1750.16px;top:151.00px;font-size:17.15px;font-weight:700;color:#000;transform:scaleX(0.9916);">354</div>
<div class="t" style="left:1531.55px;top:183.00px;font-size:17.15px;font-weight:700;color:#000;transform:scaleX(0.9243);">PO No</div>
<div class="t" style="left:1749.92px;top:183.00px;font-size:17.15px;font-weight:700;color:#000;transform:scaleX(1.1304);">0</div>
<div class="t" style="left:1531.58px;top:216.00px;font-size:17.15px;font-weight:700;color:#000;transform:scaleX(0.8895);">PO Date[ddmmyyyy]</div>
<div class="t" style="left:1749.48px;top:216.00px;font-size:17.15px;font-weight:700;color:#000;transform:scaleX(0.9947);">14-12-2025</div>
<div class="t" style="left:1531.57px;top:248.00px;font-size:17.15px;font-weight:700;color:#000;transform:scaleX(0.9040);">Bill Date</div>
<div class="t" style="left:1749.48px;top:248.00px;font-size:17.15px;font-weight:700;color:#000;transform:scaleX(0.9947);">14-12-2025</div>
<div class="t" style="left:1531.60px;top:280.00px;font-size:17.15px;font-weight:700;color:#000;transform:scaleX(0.8789);">Item Disc Amount</div>
<div class="t" style="left:1750.00px;top:280.00px;font-size:17.15px;font-weight:700;color:#000;transform:scaleX(0.9644);">6.000</div>
<div class="t" style="left:1531.61px;top:312.00px;font-size:17.15px;font-weight:700;color:#000;transform:scaleX(0.8639);">Disc%</div>
<div class="t" style="left:1750.00px;top:312.00px;font-size:17.15px;font-weight:700;color:#000;transform:scaleX(0.9761);">0.0000</div>
<div class="t" style="left:1531.60px;top:345.00px;font-size:17.15px;font-weight:700;color:#000;transform:scaleX(0.8711);">Disc Amount</div>
<div class="t" style="left:1750.00px;top:345.00px;font-size:17.15px;font-weight:700;color:#000;transform:scaleX(0.9644);">0.000</div>
<div class="t" style="left:1531.61px;top:377.00px;font-size:17.15px;font-weight:700;color:#000;transform:scaleX(0.8694);">Round off Amount</div>
<div class="t" style="left:1750.00px;top:377.00px;font-size:17.15px;font-weight:700;color:#000;transform:scaleX(0.9644);">0.000</div>
<div class="t" style="left:1532.21px;top:409.00px;font-size:17.15px;font-weight:700;color:#000;transform:scaleX(0.8575);">Scheme BillDiscAmt</div>
<div class="t" style="left:1750.00px;top:409.00px;font-size:17.15px;font-weight:700;color:#000;transform:scaleX(0.9740);">0.000</div>
<div class="t" style="left:1532.21px;top:441.00px;font-size:17.15px;font-weight:700;color:#000;transform:scaleX(0.8507);">Scheme BillDiscPerc</div>
<div class="t" style="left:1749.94px;top:441.00px;font-size:17.15px;font-weight:700;color:#000;transform:scaleX(1.0947);">0</div>
<div class="t" style="left:1532.20px;top:474.00px;font-size:17.15px;font-weight:700;color:#000;transform:scaleX(0.8692);">Scheme ItemDiscAmt</div>
<div class="t" style="left:1750.00px;top:474.00px;font-size:17.15px;font-weight:700;color:#000;transform:scaleX(0.9740);">0.000</div>
<div class="t" style="left:1531.88px;top:506.00px;font-size:17.15px;font-weight:700;color:#000;transform:scaleX(0.9094);">OtherDiscAmt</div>
<div class="t" style="left:1750.00px;top:506.00px;font-size:17.15px;font-weight:700;color:#000;transform:scaleX(0.9740);">0.000</div>
<div class="t" style="left:1532.35px;top:538.00px;font-size:17.15px;font-weight:700;color:#000;transform:scaleX(0.8537);">Total GST</div>
<div class="t" style="left:1750.00px;top:538.00px;font-size:17.15px;font-weight:700;color:#000;transform:scaleX(0.9740);">0.000</div>
<div class="t" style="left:1532.35px;top:570.00px;font-size:17.15px;font-weight:700;color:#000;transform:scaleX(0.8539);">Total Extra Cess</div>
<div class="t" style="left:1750.00px;top:570.00px;font-size:17.15px;font-weight:700;color:#000;transform:scaleX(0.9740);">0.000</div>
<div class="t" style="left:1531.91px;top:603.00px;font-size:17.15px;font-weight:700;color:#000;transform:scaleX(0.8540);">GST Calamity Cess</div>
<div class="t" style="left:1750.00px;top:603.00px;font-size:17.15px;font-weight:700;color:#000;transform:scaleX(0.9740);">0.000</div>
<div class="t" style="left:1532.35px;top:635.00px;font-size:17.15px;font-weight:700;color:#000;transform:scaleX(0.8533);">TCS Amt</div>
<div class="t" style="left:1750.00px;top:635.00px;font-size:17.15px;font-weight:700;color:#000;transform:scaleX(0.9740);">0.000</div>
<div class="t" style="left:1531.56px;top:667.00px;font-size:17.15px;font-weight:700;color:#000;transform:scaleX(0.9116);">Uniq No</div>
<div class="t" style="left:1749.49px;top:667.00px;font-size:17.15px;font-weight:700;color:#000;transform:scaleX(0.9848);">HF2526000354</div>
<div class="t" style="left:68.50px;top:800.00px;font-size:21.37px;font-weight:700;color:#000;transform:scaleX(0.8603);">Remarks</div>
<div class="t" style="left:831.49px;top:799.00px;font-size:21.22px;font-weight:700;color:#000;transform:scaleX(0.8688);">Message</div>
<div class="t" style="left:97.95px;top:869.00px;font-size:18.31px;font-weight:700;color:#000;transform:scaleX(0.8435);">Total Qty</div>
<div class="t" style="left:221.50px;top:869.00px;font-size:18.31px;font-weight:700;color:#000;transform:scaleX(0.9077);">1.000</div>
<div class="t" style="left:377.65px;top:869.00px;font-size:18.31px;font-weight:700;color:#000;transform:scaleX(0.8329);">Total Weight</div>
<div class="t" style="left:525.30px;top:869.00px;font-size:18.31px;font-weight:700;color:#000;transform:scaleX(0.9167);">0.000</div>
<div class="t" style="left:961.37px;top:867.00px;font-size:20.20px;font-weight:700;color:#000;transform:scaleX(0.8513);">Enter Item level Discount %</div>
<div class="t" style="left:1614.64px;top:864.00px;font-size:30.67px;font-weight:700;color:#000;transform:scaleX(0.8525);">Total : INR.94.000</div>
<div class="t" style="left:488.76px;top:919.00px;font-size:18.75px;font-weight:700;color:#000;transform:scaleX(0.8378);">F2 Hold</div>
<div class="t" style="left:637.34px;top:919.00px;font-size:18.75px;font-weight:700;color:#000;transform:scaleX(0.8519);">F3 New</div>
<div class="t" style="left:786.68px;top:919.00px;font-size:18.75px;font-weight:700;color:#000;transform:scaleX(0.8203);">F4 Edit</div>
<div class="t" style="left:927.30px;top:919.00px;font-size:18.75px;font-weight:700;color:#000;transform:scaleX(0.8044);">F5 Recall</div>
<div class="t" style="left:1079.71px;top:919.00px;font-size:18.75px;font-weight:700;color:#000;transform:scaleX(0.7912);">F6 Save</div>
<div class="t" style="left:1225.04px;top:919.00px;font-size:18.75px;font-weight:700;color:#000;transform:scaleX(0.8553);">F7 View</div>
<div class="t" style="left:1373.36px;top:919.00px;font-size:18.75px;font-weight:700;color:#000;transform:scaleX(0.8394);">F8 Print</div>
<div class="t" style="left:1519.27px;top:919.00px;font-size:18.75px;font-weight:700;color:#000;transform:scaleX(0.8308);">F9 Clear</div>
<div class="t" style="left:1661.68px;top:919.00px;font-size:18.75px;font-weight:700;color:#000;transform:scaleX(0.8141);">F10 Close</div>
<div class="t" style="left:1790.98px;top:919.00px;font-size:18.75px;font-weight:700;color:#000;transform:scaleX(0.8141);z-index:1;">F11 Buy XCare</div>
<div class="t" style="left:764.47px;top:436.00px;font-size:19.33px;font-weight:700;color:#fff;transform:scaleX(0.8591);z-index:6;">Authentication</div>
<div class="t" style="left:767.09px;top:489.00px;font-size:18.02px;font-weight:700;color:#000;transform:scaleX(0.8407);z-index:6;">Username:</div>
<div class="t" style="left:767.12px;top:521.00px;font-size:18.31px;font-weight:700;color:#000;transform:scaleX(0.8016);z-index:6;">Password:</div>
<div class="t" style="left:920.98px;top:488.00px;font-size:18.00px;font-weight:400;color:#000;transform:scaleX(0.9419);z-index:6;">parveen</div>
<div class="t" style="left:827.35px;top:564.00px;font-size:17.59px;font-weight:700;color:#000;transform:scaleX(0.9200);z-index:6;">Ok</div>
<div class="t" style="left:966.40px;top:563.00px;font-size:16.42px;font-weight:700;color:#000;transform:scaleX(0.9100);z-index:6;">Cancel</div>
</body></html>
